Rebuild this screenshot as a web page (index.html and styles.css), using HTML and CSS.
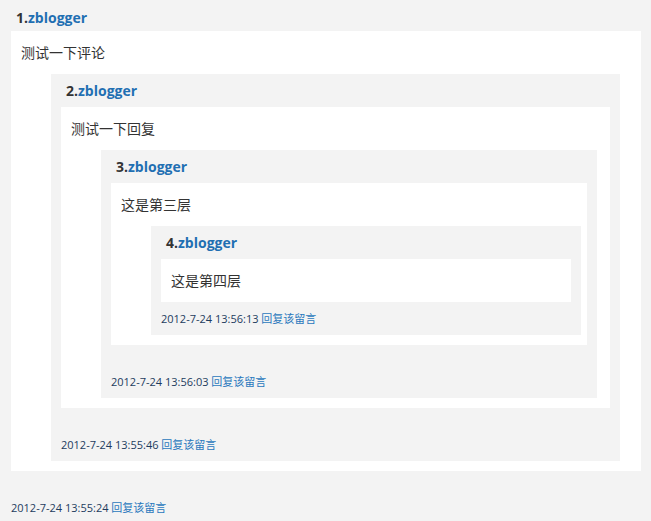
FILE: index.html
```html
<!DOCTYPE html>
<html lang="zh-CN">
<head>
    <meta charset="UTF-8">
    <title>评论</title>
    <link rel="stylesheet" href="styles.css">
</head>
<body>
    <div class="comment root">
        <div class="head"><span class="num">1.</span><a href="#">zblogger</a></div>
        <div class="body">
            <p>测试一下评论</p>
            <div class="comment">
                <div class="head"><span class="num">2.</span><a href="#">zblogger</a></div>
                <div class="body">
                    <p>测试一下回复</p>
                    <div class="comment">
                        <div class="head"><span class="num">3.</span><a href="#">zblogger</a></div>
                        <div class="body">
                            <p>这是第三层</p>
                            <div class="comment">
                                <div class="head"><span class="num">4.</span><a href="#">zblogger</a></div>
                                <div class="body">
                                    <p>这是第四层</p>
                                </div>
                                <div class="foot"><span class="date">2012-7-24 13:56:13</span> <a href="#">回复该留言</a></div>
                            </div>
                        </div>
                        <div class="foot has-reply"><span class="date">2012-7-24 13:56:03</span> <a href="#">回复该留言</a></div>
                    </div>
                </div>
                <div class="foot has-reply"><span class="date">2012-7-24 13:55:46</span> <a href="#">回复该留言</a></div>
            </div>
        </div>
        <div class="foot has-reply"><span class="date">2012-7-24 13:55:24</span> <a href="#">回复该留言</a></div>
    </div>
</body>
</html>
```

FILE: styles.css
```css
body {
    margin: 0;
    background-color: #f3f3f3;
    font-family: "Open Sans", "Noto Sans CJK SC", sans-serif;
    color: #333;
}
a {
    color: #1f6fb2;
    text-decoration: none;
}
.comment {
    background-color: #f3f3f3;
    padding: 0 10px;
}
.comment.root {
    padding: 0 10px 0 11px;
}
/* 子评论缩进 */
.body .comment {
    width: 90%;
    margin: 10px 0 0 30px;
}
.head {
    height: 33px;
    line-height: 33px;
    padding-left: 5px;
    font-size: 14px;
    font-weight: bold;
}
.root > .head {
    height: 31px;
    line-height: 35px;
}
.num {
    color: #333;
}
.body {
    background-color: #fff;
    padding: 10px;
}
.body p {
    margin: 0;
    font-size: 14px;
    line-height: 23px;
}
.foot {
    line-height: 33px;
    font-size: 11px;
}
.foot.has-reply {
    padding-top: 20px;
}
.date {
    color: #1d3c5e;
}
.foot a {
    color: #2a78bd;
}
```
